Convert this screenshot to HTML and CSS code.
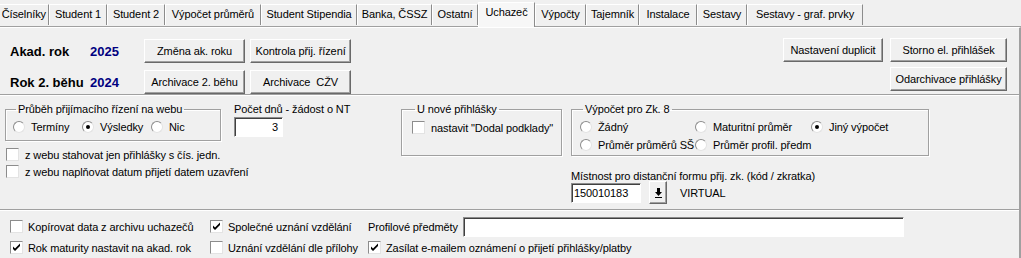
FILE: index.html
```html
<!DOCTYPE html>
<html lang="cs">
<head>
  <meta charset="UTF-8" />
  <title>Uchazeč</title>
  <link rel="stylesheet" href="styles.css">
</head>
<body>
  <div class="tabs">
    <div class="tab" style="width:49px">Číselníky</div>
    <div class="tab" style="width:58px">Student 1</div>
    <div class="tab" style="width:58px">Student 2</div>
    <div class="tab" style="width:96px">Výpočet průměrů</div>
    <div class="tab" style="width:96px">Student Stipendia</div>
    <div class="tab" style="width:75px">Banka, ČSSZ</div>
    <div class="tab" style="width:46px">Ostatní</div>
    <div class="tab active" style="width:57px">Uchazeč</div>
    <div class="tab" style="width:51px">Výpočty</div>
    <div class="tab" style="width:53px">Tajemník</div>
    <div class="tab" style="width:58px">Instalace</div>
    <div class="tab" style="width:50px">Sestavy</div>
    <div class="tab" style="width:116px">Sestavy - graf. prvky</div>
  </div>

  <div class="page">
    <!-- akademicky rok a archivace -->
    <div class="top">
      <div class="years">
        <span class="big">Akad. rok</span>
        <span class="big year">2025</span>
        <button class="btn">Změna ak. roku</button>
        <button class="btn">Kontrola přij. řízení</button>
        <span class="big">Rok 2. běhu</span>
        <span class="big year">2024</span>
        <button class="btn">Archivace 2. běhu</button>
        <button class="btn">Archivace&nbsp; CŽV</button>
      </div>
      <div class="right-btns">
        <button class="btn" style="width:100px">Nastavení duplicit</button>
        <button class="btn" style="width:117px">Storno el. přihlášek</button>
        <button class="btn" style="width:117px">Odarchivace přihlášky</button>
      </div>
    </div>

    <div class="middle">
      <div class="col1">
        <fieldset class="group web">
          <legend>Průběh přijímacího řízení na webu</legend>
          <label class="opt" style="width:69px"><span class="radio"></span>Termíny</label>
          <label class="opt" style="width:69px"><span class="radio on"></span>Výsledky</label>
          <label class="opt"><span class="radio"></span>Nic</label>
        </fieldset>
        <label class="opt check-row"><span class="check"></span>z webu stahovat jen přihlášky s čís. jedn.</label>
        <label class="opt check-row"><span class="check"></span>z webu naplňovat datum přijetí datem uzavření</label>
      </div>

      <div class="col2">
        <div class="caption">Počet dnů - žádost o NT</div>
        <div class="field num">3</div>
      </div>

      <div class="col3">
        <fieldset class="group nova">
          <legend>U nové přihlášky</legend>
          <label class="opt"><span class="check"></span>nastavit "Dodal podklady"</label>
        </fieldset>
      </div>

      <div class="col4">
        <fieldset class="group zk">
          <legend>Výpočet pro Zk. 8</legend>
          <div class="zk-grid">
            <label class="opt"><span class="radio"></span>Žádný</label>
            <label class="opt"><span class="radio"></span>Maturitní průměr</label>
            <label class="opt"><span class="radio on"></span>Jiný výpočet</label>
            <label class="opt"><span class="radio"></span>Průměr průměrů SŠ</label>
            <label class="opt"><span class="radio"></span>Průměr profil. předm</label>
          </div>
        </fieldset>
        <div class="caption room-caption">Místnost pro distanční formu přij. zk. (kód / zkratka)</div>
        <div class="room">
          <div class="field room-code">150010183</div>
          <button class="btn pick">
            <svg width="9" height="10" viewBox="0 0 9 10"><path d="M3 0h3v4h2l-3.5 4-3.5-4h2z" fill="#000"/><rect x="1" y="9" width="7" height="1" fill="#000"/></svg>
          </button>
          <span class="virtual">VIRTUAL</span>
        </div>
      </div>
    </div>

    <div class="bottom">
      <label class="opt"><span class="check"></span>Kopírovat data z archivu uchazečů</label>
      <label class="opt"><span class="check on"></span>Společné uznání vzdělání</label>
      <div class="profil">
        <span>Profilové předměty</span>
        <div class="field profil-input"></div>
      </div>
      <label class="opt"><span class="check on"></span>Rok maturity nastavit na akad. rok</label>
      <label class="opt"><span class="check"></span>Uznání vzdělání dle přílohy</label>
      <label class="opt"><span class="check on"></span>Zasílat e-mailem oznámení o přijetí přihlášky/platby</label>
    </div>
  </div>
</body>
</html>
```

FILE: styles.css
```css
body {
  margin: 0;
  background: #f0f0f0;
  color: #000;
  font-family: "Liberation Sans", Arial, sans-serif;
  font-size: 11px;
  letter-spacing: -0.1px;
  width: 1021px;
  height: 258px;
  overflow: hidden;
}

/* zalozky */
.tabs {
  display: flex;
  align-items: flex-end;
  height: 27px;
  box-sizing: border-box;
  border-bottom: 1px solid #a0a0a0;
}

.tab {
  box-sizing: border-box;
  height: 21px;
  margin-bottom: 1px;
  line-height: 19px;
  text-align: center;
  white-space: nowrap;
  border-top: 1px solid #fff;
  border-left: 1px solid #fff;
  border-right: 1px solid #8c8c8c;
  background: #f0f0f0;
}

.tab:first-child {
  border-left: none;
  text-align: right;
  padding-right: 2px;
}

.tab.active {
  height: 25px;
  margin-bottom: -1px;
  line-height: 18px;
  background: #f7f7f7;
  position: relative;
}

.page {
  height: 231px;
  border-top: 1px solid #fff;
  border-right: 2px solid #a0a0a0;
  box-sizing: border-box;
}

/* tlacitka */
.btn {
  box-sizing: border-box;
  height: 24px;
  margin: 0;
  padding: 0;
  font: inherit;
  letter-spacing: inherit;
  color: #000;
  background: #f0f0f0;
  border: 1px solid;
  border-color: #fff #696969 #696969 #fff;
  box-shadow: inset -1px -1px 0 #a0a0a0;
  white-space: nowrap;
}

.top {
  display: flex;
  justify-content: space-between;
  height: 67px;
  padding: 11px 12px 0 10px;
  box-sizing: border-box;
  border-bottom: 1px solid #a0a0a0;
}

.years {
  display: grid;
  grid-template-columns: 75px 49px 101px 101px;
  grid-auto-rows: 24px;
  column-gap: 5px;
  row-gap: 7px;
  align-items: center;
}

.big {
  font-size: 13px;
  font-weight: bold;
  letter-spacing: 0;
}

.year {
  color: #000080;
}

.right-btns {
  display: flex;
  flex-wrap: wrap;
  justify-content: flex-end;
  align-content: flex-start;
  width: 224px;
  gap: 5px 7px;
  margin-top: -1px;
}

/* stred */
.middle {
  display: flex;
  align-items: flex-start;
  height: 115px;
  padding: 7px 0 0 5px;
  box-sizing: border-box;
  border-top: 1px solid #fff;
  border-bottom: 1px solid #a0a0a0;
}

.group {
  margin: 0;
  box-sizing: border-box;
  border: 1px solid #a0a0a0;
  box-shadow: inset 1px 1px 0 #fff, 1px 1px 0 #fff;
}

.group legend {
  padding: 0 2px;
  margin-left: 3px;
  line-height: 13px;
}

.opt {
  display: flex;
  align-items: center;
  white-space: nowrap;
  height: 17px;
}

.radio {
  box-sizing: border-box;
  width: 12px;
  height: 12px;
  margin-right: 6px;
  border-radius: 50%;
  background: #fff;
  border: 1px solid;
  border-color: #8c8c8c #e3e3e3 #e3e3e3 #8c8c8c;
  display: flex;
  align-items: center;
  justify-content: center;
  flex: none;
}

.radio.on::after {
  content: "";
  width: 4px;
  height: 4px;
  border-radius: 50%;
  background: #000;
}

.check {
  box-sizing: border-box;
  width: 13px;
  height: 13px;
  margin-right: 6px;
  background: #fff;
  border: 1px solid;
  border-color: #8c8c8c #e3e3e3 #e3e3e3 #8c8c8c;
  flex: none;
}

.check.on {
  background: #fff url("data:image/svg+xml;utf8,<svg xmlns='http://www.w3.org/2000/svg' width='11' height='11'><path d='M2 4.5l2 2 5-5v2.5l-5 5-2-2z' fill='black'/></svg>") no-repeat center;
}

.field {
  box-sizing: border-box;
  height: 20px;
  background: #fff;
  border: 1px solid;
  border-color: #8c8c8c #fff #fff #8c8c8c;
  box-shadow: inset 1px 1px 0 #404040;
  padding: 0 4px;
  line-height: 18px;
}

.col1 {
  width: 229px;
  flex: none;
}

.web {
  display: flex;
  width: 216px;
  height: 38px;
  padding: 2px 0 0 7px;
}

.check-row {
  margin-left: 1px;
  height: 17px;
}

.col1 .check-row:first-of-type {
  margin-top: 5px;
}

.col2 {
  width: 167px;
  flex: none;
}

.caption {
  line-height: 13px;
}

.num {
  width: 49px;
  margin-top: 1px;
  text-align: right;
}

.col3 {
  width: 170px;
  flex: none;
}

.nova {
  width: 161px;
  height: 53px;
  padding: 3px 0 0 10px;
}

.col4 {
  flex: none;
}

.zk {
  width: 358px;
  height: 53px;
  padding: 2px 0 0 8px;
}

.zk-grid {
  display: grid;
  grid-template-columns: 115px 116px auto;
  grid-auto-rows: 18px;
  align-items: center;
}

.room-caption {
  margin-top: 14px;
}

.room {
  display: flex;
  align-items: center;
  margin-top: -2px;
}

.room-code {
  width: 70px;
  padding: 0 2px;
}

.pick {
  width: 18px;
  height: 23px;
  margin-left: 8px;
  display: flex;
  align-items: center;
  justify-content: center;
}

.virtual {
  margin-left: 13px;
}

/* spodni radek */
.bottom {
  display: grid;
  grid-template-columns: 200px 158px auto;
  grid-template-rows: 21px 21px;
  padding: 5px 0 0 10px;
  border-top: 1px solid #fff;
}

.bottom .opt {
  height: 21px;
}

.bottom .check {
  margin-right: 5px;
}

.profil {
  display: flex;
  align-items: center;
  gap: 5px;
}

.profil-input {
  width: 441px;
}
```
